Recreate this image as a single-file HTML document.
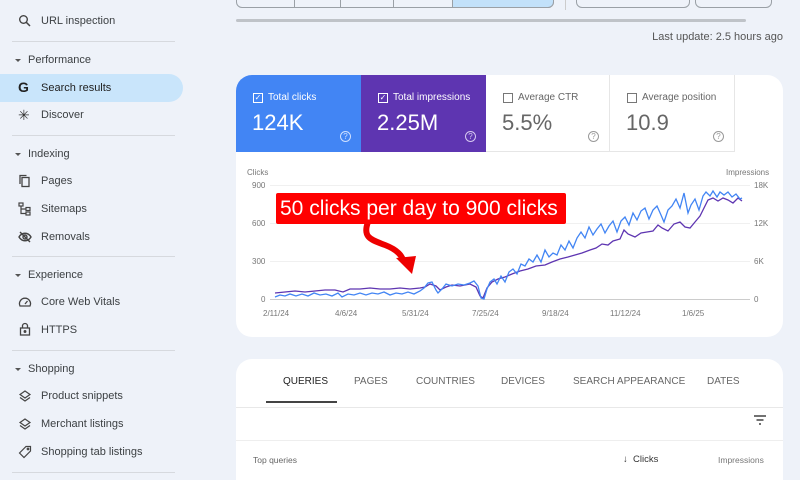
<!DOCTYPE html>
<html><head><meta charset="utf-8"><style>
*{margin:0;padding:0;box-sizing:border-box}
html,body{width:800px;height:480px;overflow:hidden}
body{background:#eef2f9;font-family:"Liberation Sans",sans-serif;position:relative;color:#3c4043}
.a{position:absolute}
.it{position:absolute;left:41px;font-size:11px;color:#3c4043;transform:translateY(-50%)}
.hd{position:absolute;left:28px;font-size:11px;color:#3c4043;transform:translateY(-50%)}
.car{position:absolute;left:15px;width:0;height:0;border-left:3px solid transparent;border-right:3px solid transparent;border-top:3px solid #555}
.dv{position:absolute;left:12px;width:163px;height:1px;background:#d6d9de}
.ic{position:absolute;left:18px;width:14px;height:14px}
.btn{position:absolute;top:-10px;height:18px;border:1px solid #9aa0a6;border-radius:0 0 6px 6px;background:#eef2f9}
.tile{position:absolute;top:75px;height:77px;width:125px}
.tile .l{position:absolute;left:32px;top:17px;font-size:10px}
.tile .v{position:absolute;left:16px;top:35px;font-size:22px}
.tile .cb{position:absolute;left:17px;top:18px;width:10px;height:10px;border:1px solid;font-size:8px;line-height:8px;text-align:center}
.tile .q{position:absolute;right:10px;top:56px;width:11px;height:11px;border-radius:50%;border:1px solid;font-size:8px;text-align:center;line-height:9px}
.ax{position:absolute;font-size:8px;color:#777}
.tab{position:absolute;top:376px;font-size:10px;color:#666}
</style></head><body>
<svg class="ic" style="top:14px" viewBox="0 0 14 14"><circle cx="5.5" cy="5.5" r="3.8" fill="none" stroke="#444" stroke-width="1.4"/><path d="M8.3 8.3L12 12" stroke="#444" stroke-width="1.5"/></svg>
<div class="it" style="top:21px">URL inspection</div>
<div class="dv" style="top:41px"></div>
<div class="car" style="top:59px"></div><div class="hd" style="top:60px">Performance</div>
<div class="a" style="left:0;top:74px;width:183px;height:28px;background:#c9e5fb;border-radius:0 14px 14px 0"></div>
<div class="a" style="left:18px;top:79px;font-size:14px;font-weight:bold;color:#222">G</div>
<div class="it" style="top:88px;color:#222">Search results</div>
<div class="a" style="left:18px;top:107px;font-size:14px;color:#333">✳</div>
<div class="it" style="top:115px">Discover</div>
<div class="dv" style="top:135px"></div>
<div class="car" style="top:153px"></div><div class="hd" style="top:154px">Indexing</div>
<svg class="ic" style="top:174px" viewBox="0 0 14 14"><rect x="4" y="3.5" width="7" height="9" fill="none" stroke="#444" stroke-width="1.3"/><path d="M2 10V1.5h6.5" fill="none" stroke="#444" stroke-width="1.3"/></svg>
<div class="it" style="top:181px">Pages</div>
<svg class="ic" style="top:202px" viewBox="0 0 14 14" fill="none" stroke="#444" stroke-width="1.2"><rect x="1" y="1" width="4" height="3"/><rect x="8" y="5.5" width="4" height="3"/><rect x="8" y="10" width="4" height="3"/><path d="M3 4v7.5h5M3 7h5"/></svg>
<div class="it" style="top:209px">Sitemaps</div>
<svg class="ic" style="top:230px" viewBox="0 0 14 14" fill="none" stroke="#444" stroke-width="1.4"><path d="M1 7c3-5 9-5 12 0-3 5-9 5-12 0z"/><circle cx="7" cy="7" r="2"/><path d="M2 2l10 10"/></svg>
<div class="it" style="top:237px">Removals</div>
<div class="dv" style="top:256px"></div>
<div class="car" style="top:274px"></div><div class="hd" style="top:275px">Experience</div>
<svg class="ic" style="top:295px" viewBox="0 0 14 14" fill="none" stroke="#444" stroke-width="1.3"><path d="M2 11a5.5 5.5 0 1 1 10 0z"/><path d="M7 9l2.5-3"/></svg>
<div class="it" style="top:302px">Core Web Vitals</div>
<svg class="ic" style="top:322px" viewBox="0 0 14 14" fill="none" stroke="#444" stroke-width="1.3"><rect x="2.5" y="6" width="9" height="7"/><path d="M4.5 6V4a2.5 2.5 0 0 1 5 0v2"/><circle cx="7" cy="9.5" r=".8" fill="#444"/></svg>
<div class="it" style="top:330px">HTTPS</div>
<div class="dv" style="top:350px"></div>
<div class="car" style="top:368px"></div><div class="hd" style="top:369px">Shopping</div>
<svg class="ic" style="top:389px" viewBox="0 0 14 14" fill="none" stroke="#444" stroke-width="1.2"><path d="M7 2l5 3.5-5 3.5-5-3.5z"/><path d="M2 8.5l5 3.5 5-3.5"/></svg>
<div class="it" style="top:396px">Product snippets</div>
<svg class="ic" style="top:417px" viewBox="0 0 14 14" fill="none" stroke="#444" stroke-width="1.2"><path d="M7 2l5 3.5-5 3.5-5-3.5z"/><path d="M2 8.5l5 3.5 5-3.5"/></svg>
<div class="it" style="top:424px">Merchant listings</div>
<svg class="ic" style="top:445px" viewBox="0 0 14 14" fill="none" stroke="#444" stroke-width="1.2"><path d="M1.5 8L8 1.5h4.5V6L6 12.5z"/><circle cx="10" cy="4" r=".8"/></svg>
<div class="it" style="top:452px">Shopping tab listings</div>
<div class="dv" style="top:472px"></div>

<div class="btn" style="left:236px;width:318px"></div>
<div class="a" style="left:294px;top:-2px;width:1px;height:9px;background:#9aa0a6"></div>
<div class="a" style="left:340px;top:-2px;width:1px;height:9px;background:#9aa0a6"></div>
<div class="a" style="left:393px;top:-2px;width:1px;height:9px;background:#9aa0a6"></div>
<div class="a" style="left:452px;top:-10px;width:102px;height:18px;background:#c2e1fa;border:1px solid #9aa0a6;border-radius:0 0 6px 0"></div>
<div class="a" style="left:565px;top:0;width:1px;height:10px;background:#ccc"></div>
<div class="btn" style="left:576px;width:114px"></div>
<div class="btn" style="left:695px;width:77px"></div>
<div class="a" style="left:236px;top:19px;width:510px;height:3px;background:#bfc3c8;border-radius:2px"></div>
<div class="a" style="right:17px;top:31px;font-size:11px;color:#555">Last update: 2.5 hours ago</div>

<div class="a" style="left:236px;top:75px;width:547px;height:262px;background:#fff;border-radius:16px"></div>
<div class="tile" style="left:236px;background:#4285f4;color:#fff;border-radius:16px 0 0 0"><div class="cb" style="border-color:#fff">✓</div><div class="l">Total clicks</div><div class="v">124K</div><div class="q" style="border-color:#cfe0ff;color:#cfe0ff">?</div></div>
<div class="tile" style="left:361px;background:#5e35b1;color:#fff"><div class="cb" style="border-color:#fff">✓</div><div class="l">Total impressions</div><div class="v">2.25M</div><div class="q" style="border-color:#d6c8f0;color:#d6c8f0">?</div></div>
<div class="tile" style="left:486px;width:124px;border-right:1px solid #e6e6e6;border-bottom:1px solid #e6e6e6;color:#666"><div class="cb" style="border-color:#777"></div><div class="l">Average CTR</div><div class="v">5.5%</div><div class="q" style="border-color:#999;color:#999">?</div></div>
<div class="tile" style="left:610px;border-right:1px solid #e6e6e6;border-bottom:1px solid #e6e6e6;color:#666"><div class="cb" style="border-color:#777"></div><div class="l">Average position</div><div class="v">10.9</div><div class="q" style="border-color:#999;color:#999">?</div></div>

<div class="ax" style="left:247px;top:168px">Clicks</div>
<div class="ax" style="left:726px;top:168px">Impressions</div>
<div class="ax" style="left:252px;top:181px">900</div><div class="ax" style="left:252px;top:219px">600</div><div class="ax" style="left:252px;top:257px">300</div><div class="ax" style="left:261px;top:295px">0</div>
<div class="ax" style="left:754px;top:181px">18K</div><div class="ax" style="left:754px;top:219px">12K</div><div class="ax" style="left:754px;top:257px">6K</div><div class="ax" style="left:754px;top:295px">0</div>
<div class="ax" style="left:263px;top:309px">2/11/24</div><div class="ax" style="left:335px;top:309px">4/6/24</div><div class="ax" style="left:402px;top:309px">5/31/24</div><div class="ax" style="left:472px;top:309px">7/25/24</div><div class="ax" style="left:542px;top:309px">9/18/24</div><div class="ax" style="left:610px;top:309px">11/12/24</div><div class="ax" style="left:682px;top:309px">1/6/25</div>
<svg class="a" style="left:0;top:0" width="800" height="480">
<g stroke="#f0f0f0" stroke-width="1"><line x1="270" y1="185.5" x2="750" y2="185.5"/><line x1="270" y1="223.5" x2="750" y2="223.5"/><line x1="270" y1="261.5" x2="750" y2="261.5"/></g>
<line x1="270" y1="299.5" x2="750" y2="299.5" stroke="#ccc"/>
<polyline fill="none" stroke="#5e35b1" stroke-width="1.3" points="275,293 285,292 295,291 305,292 315,291 325,290 335,290 343,292 350,289 360,289 370,288 380,289 390,289 400,288 410,289 420,288 425,287 430,284 436,286 440,290 446,287 452,285 460,286 470,284 476,287 480,296 483,298 487,288 492,282 498,279 505,277 512,274 520,271 528,269 536,266 545,265 552,262 560,259 568,257 575,255 582,253 590,250 596,248 602,244 608,245 613,241 620,239 624,230 628,234 635,237 641,233 647,232 653,231 658,225 662,228 668,231 674,224 680,222 685,227 690,228 695,222 700,216 703,210 708,200 713,198 718,201 723,198 728,200 733,203 738,198 742,201"/>
<polyline fill="none" stroke="#4285f4" stroke-width="1.3" points="275,297 280,295 285,296 290,294 296,296 302,294 308,296 314,293 320,295 326,294 332,296 338,293 342,297 348,294 354,295 360,293 366,295 372,293 378,294 384,292 390,295 396,293 402,294 408,292 414,294 420,291 424,288 428,283 432,282 436,290 438,293 442,289 446,284 452,286 458,284 464,285 470,283 474,281 478,286 481,298 484,299 487,289 490,282 494,279 497,284 501,276 505,282 509,272 513,269 517,274 521,264 525,266 529,259 533,262 537,255 541,262 545,250 549,257 553,253 557,255 561,245 565,250 569,241 573,248 577,238 581,232 585,238 589,227 593,235 597,229 601,224 605,233 609,226 613,221 617,232 621,221 625,217 629,225 633,213 637,220 641,211 645,208 649,219 653,210 657,206 661,215 664,222 668,210 672,206 676,199 680,208 684,193 688,213 691,205 695,199 699,210 703,196 706,192 710,196 713,191 717,197 720,192 724,195 728,192 732,197 736,194 740,199 742,198"/>
<path d="M368 222 C362 238,372 240,385 245 C398 250,402 256,404 262" fill="none" stroke="#e00" stroke-width="6"/>
<path d="M396 258 L412 274 L416 256 Z" fill="#e00"/>
</svg>
<div class="a" style="left:276px;top:193px;width:290px;height:31px;background:#f00;color:#fff;font-family:'Liberation Sans',sans-serif;font-size:21px;line-height:31px;padding-left:4px;border-radius:2px;white-space:nowrap;overflow:hidden">50 clicks per day to 900 clicks</div>

<div class="a" style="left:236px;top:359px;width:547px;height:121px;background:#fff;border-radius:16px 16px 0 0"></div>
<div class="tab" style="left:283px;color:#222">QUERIES</div>
<div class="tab" style="left:354px">PAGES</div>
<div class="tab" style="left:416px">COUNTRIES</div>
<div class="tab" style="left:501px">DEVICES</div>
<div class="tab" style="left:573px">SEARCH APPEARANCE</div>
<div class="tab" style="left:707px">DATES</div>
<div class="a" style="left:266px;top:401px;width:71px;height:2px;background:#444"></div>
<div class="a" style="left:236px;top:407px;width:547px;height:1px;background:#e8e8e8"></div>
<svg class="a" style="left:753px;top:414px" width="14" height="12"><path d="M1 2h12M3.5 6h7M6 10h2" stroke="#444" stroke-width="1.4"/></svg>
<div class="a" style="left:236px;top:440px;width:547px;height:1px;background:#eee"></div>
<div class="a" style="left:253px;top:455px;font-size:8.5px;color:#666">Top queries</div>
<div class="a" style="left:623px;top:454px;font-size:9.5px;color:#333">↓&nbsp; Clicks</div>
<div class="a" style="left:718px;top:455px;font-size:8.5px;color:#777">Impressions</div>
</body></html>
